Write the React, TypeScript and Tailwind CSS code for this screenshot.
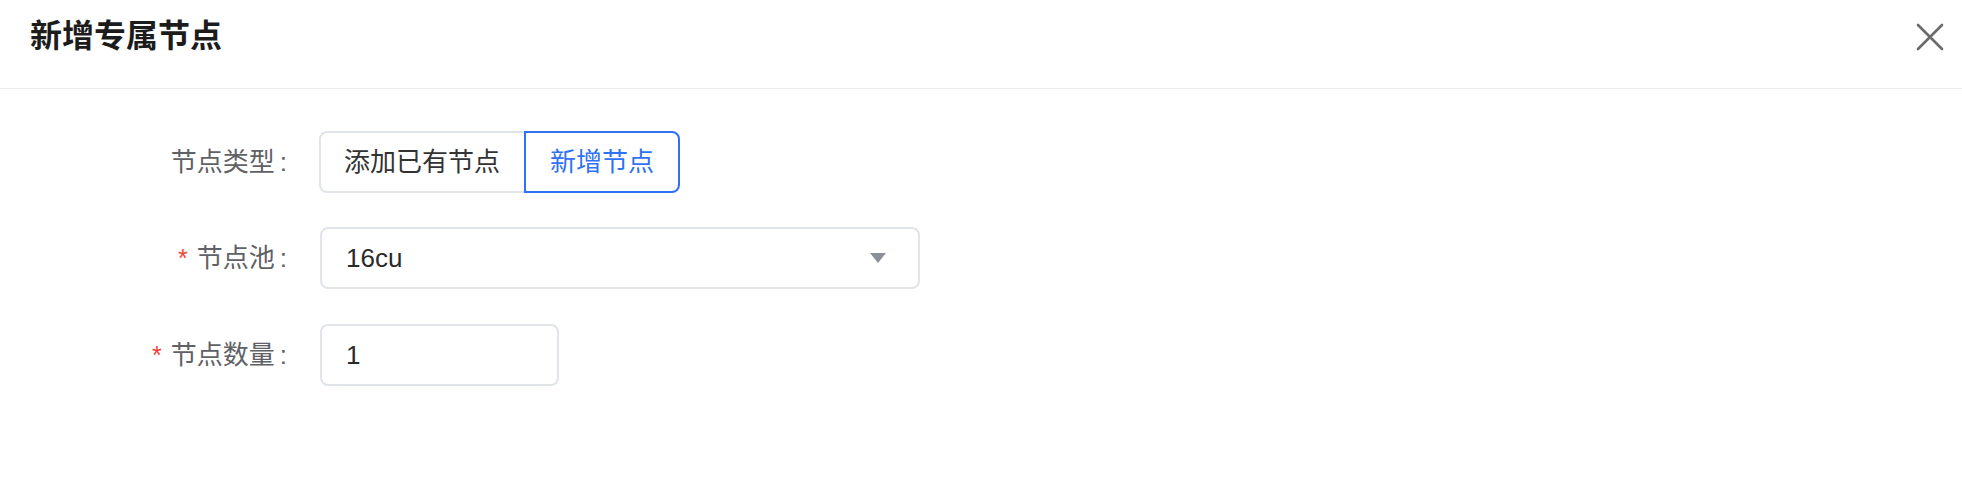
import { JSX } from "react";

/* ---------------- TYPES ---------------- */

interface FormRowProps {
  label: string;
  required?: boolean;
  className?: string;
  children: React.ReactNode;
}

/* ---------------- PIECES ---------------- */

function FormRow({ label, required, className, children }: FormRowProps): JSX.Element {
  return (
    <div className={`flex items-center ${className ?? ""}`}>
      <div className="w-[290px] flex items-center justify-end text-[26px] leading-[36px] text-[#5f6166]">
        {required && <span className="text-[#f04438] mr-[9px] text-[25px]">*</span>}
        <span>{label}</span>
        <span className="ml-[5px] mr-[3px]">:</span>
      </div>
      <div className="ml-[30px]">{children}</div>
    </div>
  );
}

function CloseIcon(): JSX.Element {
  return (
    <svg width="28" height="28" viewBox="0 0 28 28" fill="none">
      <path d="M2 2L26 26M26 2L2 26" stroke="#6b6b6b" strokeWidth="2.6" strokeLinecap="round" />
    </svg>
  );
}

/* ---------------- COMPONENT ---------------- */

export default function App(): JSX.Element {
  return (
    <div
      className="w-[1962px] h-[498px] bg-white overflow-hidden"
      style={{ fontFamily: '"Liberation Sans", "Noto Sans CJK SC", sans-serif' }}
    >
      {/* HEADER */}
      <div className="h-[89px] border-b border-[#ececec] flex items-start justify-between pl-[30px] pr-[18px] pt-[18px]">
        <h2 className="text-[32px] leading-[36px] font-bold text-[#1c1c1c]">新增专属节点</h2>
        <button className="mt-[5px]">
          <CloseIcon />
        </button>
      </div>

      {/* BODY */}
      <div className="pt-[42px]">
        <FormRow label="节点类型">
          <div className="flex h-[62px] -ml-px text-[26px] leading-[36px]">
            <button className="h-full pl-[23px] pr-[24px] rounded-l-[8px] border-2 border-r-0 border-[#e1e4e9] text-[#333] bg-white">
              添加已有节点
            </button>
            <button className="h-full px-[24px] rounded-r-[8px] border-2 border-[#2f72f2] text-[#2f72f2] bg-white">
              新增节点
            </button>
          </div>
        </FormRow>

        <FormRow label="节点池" required className="mt-[34px]">
          <div className="w-[600px] h-[62px] rounded-[8px] border-2 border-[#e1e4e9] flex items-center justify-between pl-[24px] pr-[32px] text-[26px] text-[#2b2b2b]">
            <span>16cu</span>
            <svg width="16" height="10" viewBox="0 0 16 10">
              <path d="M0 0H16L8 10Z" fill="#8c9199" />
            </svg>
          </div>
        </FormRow>

        <FormRow label="节点数量" required className="mt-[35px]">
          <div className="w-[239px] h-[62px] rounded-[8px] border-2 border-[#e1e4e9] flex items-center pl-[24px] text-[26px] text-[#2b2b2b]">
            1
          </div>
        </FormRow>
      </div>
    </div>
  );
}
